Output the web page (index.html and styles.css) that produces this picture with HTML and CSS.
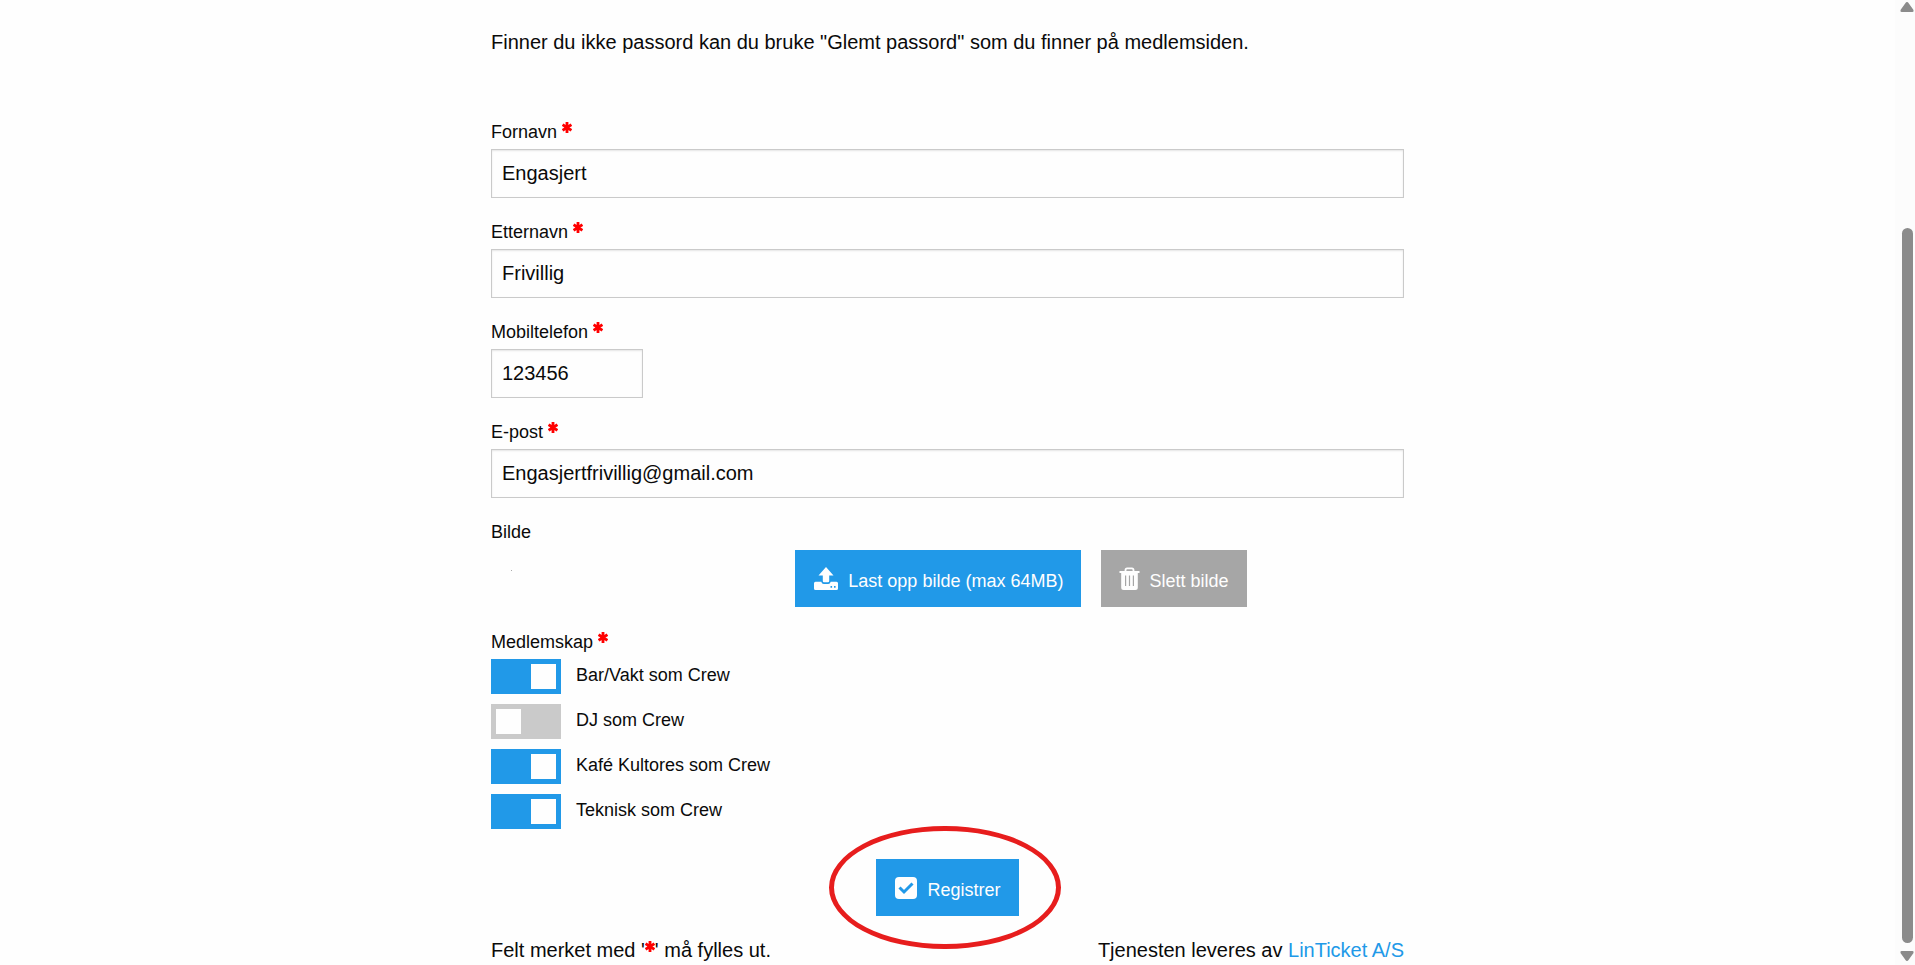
FILE: index.html
```html
<!DOCTYPE html>
<html lang="no">
  <head>
    <meta charset="UTF-8" />
    <meta name="viewport" content="width=device-width, initial-scale=1.0" />
    <title>Registrering</title>
    <link rel="stylesheet" href="styles.css">
  </head>
  <body>
    <svg class="sprite" aria-hidden="true">
      <symbol id="icon-star" viewBox="0 0 10 11">
        <path d="M5 0v11M.6 2.6l8.8 5.8M9.4 2.6L.6 8.4" stroke="currentColor" stroke-width="2.8" fill="none" />
      </symbol>
    </svg>

    <main class="page">
      <form class="container">
        <p class="intro">Finner du ikke passord kan du bruke "Glemt passord" som du finner på medlemsiden.</p>

        <div class="field">
          <label for="fornavn">Fornavn <svg class="required"><use href="#icon-star" /></svg></label>
          <input type="text" id="fornavn" value="Engasjert" />
        </div>
        <div class="field">
          <label for="etternavn">Etternavn <svg class="required"><use href="#icon-star" /></svg></label>
          <input type="text" id="etternavn" value="Frivillig" />
        </div>
        <div class="field">
          <label for="mobil">Mobiltelefon <svg class="required"><use href="#icon-star" /></svg></label>
          <input type="tel" id="mobil" class="short" value="123456" />
        </div>
        <div class="field">
          <label for="epost">E-post <svg class="required"><use href="#icon-star" /></svg></label>
          <input type="email" id="epost" value="Engasjertfrivillig@gmail.com" />
        </div>

        <div class="field">
          <div class="label">Bilde</div>
          <div class="image-row">
            <div class="preview"></div>
            <div class="image-buttons">
              <button type="button" class="btn btn-primary">
                <svg width="26" height="24" viewBox="-1 0 26 24" fill="currentColor">
                  <path d="M12 0l7.5 8.5h-4.3V14q0 1.200-1.200 1.200h-4Q8.800 15.200 8.800 14V8.500H4.500z" />
                  <path fill-rule="evenodd" d="M1.500 14.800h5.800q.5 2.200 2.500 2.200h4.400q2 0 2.500-2.200h5.800q1.500 0 1.500 1.500v5.200q0 1.500-1.500 1.500h-21Q0 23 0 21.500v-5.200q0-1.500 1.500-1.500zM16.500 19v1.800h1.600V19zM20 19v1.800h1.600V19z" />
                </svg>
                <span>Last opp bilde (max 64MB)</span>
              </button>
              <button type="button" class="btn btn-secondary">
                <svg width="21" height="24" viewBox="0 0 21 24">
                  <path d="M6.500 4V3q0-1.600 1.600-1.600h4.800q1.600 0 1.600 1.600v1" fill="none" stroke="currentColor" stroke-width="1.800" />
                  <path fill="currentColor" fill-rule="evenodd" d="M.5 4h20v2h-1.700v14.500q0 2.500-2.500 2.500H4.700q-2.500 0-2.500-2.500V6H.5zM6 8.500V19h1.200V8.500zM9.900 8.500V19h1.200V8.500zM13.800 8.500V19H15V8.500z" />
                </svg>
                <span>Slett bilde</span>
              </button>
            </div>
          </div>
        </div>

        <fieldset class="memberships">
          <legend>Medlemskap <svg class="required"><use href="#icon-star" /></svg></legend>
          <div class="switch">
            <input type="checkbox" id="bar" checked />
            <label for="bar">Bar/Vakt som Crew</label>
          </div>
          <div class="switch">
            <input type="checkbox" id="dj" />
            <label for="dj">DJ som Crew</label>
          </div>
          <div class="switch">
            <input type="checkbox" id="kafe" checked />
            <label for="kafe">Kafé Kultores som Crew</label>
          </div>
          <div class="switch">
            <input type="checkbox" id="teknisk" checked />
            <label for="teknisk">Teknisk som Crew</label>
          </div>
        </fieldset>

        <div class="submit">
          <button type="submit" class="btn btn-primary">
            <svg width="24" height="24" viewBox="0 0 24 24">
              <rect x="1" y="1" width="22" height="22" rx="4" fill="currentColor" />
              <path d="M5.500 11.500l4.500 4.500 8.500-8.500" fill="none" stroke="#2199e8" stroke-width="3" />
            </svg>
            <span>Registrer</span>
          </button>
          <span class="highlight"></span>
        </div>

        <div class="footer">
          <span>Felt merket med '<svg class="required"><use href="#icon-star" /></svg>' må fylles ut.</span>
          <span>Tjenesten leveres av <a href="#">LinTicket A/S</a></span>
        </div>
      </form>
    </main>

    <div class="scrollbar" aria-hidden="true">
      <svg width="14" height="10" viewBox="0 0 14 10"><path d="M7 0q1 0 1.500 1l5 7q.5 2-1 2h-11q-1.500 0-1-2l5-7Q6 0 7 0z" /></svg>
      <div class="track">
        <div class="thumb"></div>
      </div>
      <svg width="14" height="10" viewBox="0 0 14 10"><path d="M7 10q1 0 1.500-1l5-7q.5-2-1-2h-11Q0 0 .5 2l5 7q.5 1 1.500 1z" /></svg>
    </div>
  </body>
</html>
```
FILE: styles.css
```css
* {
  box-sizing: border-box;
}
body {
  margin: 0;
  height: 100vh;
  display: flex;
  overflow: hidden;
  background: #fefefe;
  color: #0a0a0a;
  font-family: Arial, "Liberation Sans", sans-serif;
  font-size: 20px;
  line-height: 28px;
}
.sprite {
  display: none;
}
.page {
  flex: 1;
}
.container {
  max-width: 913px;
  margin: 0 auto;
  padding-top: 28px;
}
.intro {
  margin: 0 0 62px;
}
.field {
  margin-bottom: 20px;
}
.field label,
.field .label,
legend {
  display: block;
  padding: 0;
  margin-bottom: 2px;
  font-size: 18px;
  line-height: 29px;
}
.required {
  width: 10px;
  height: 11px;
  color: #f00;
  vertical-align: 5px;
}
.field input {
  display: block;
  width: 100%;
  height: 49px;
  padding: 0 10px;
  border: 1px solid #cacaca;
  border-radius: 0;
  background: #fefefe;
  box-shadow: inset 0 1px 2px rgba(10, 10, 10, 0.1);
  color: #0a0a0a;
  font-family: inherit;
  font-size: 20px;
}
.field .short {
  width: 152px;
}
.image-row {
  display: grid;
  grid-template-columns: 1fr 2fr;
  padding: 1px 0;
}
.preview {
  width: 1px;
  height: 1px;
  margin: 20px;
  background: #aaa;
}
.image-buttons {
  display: flex;
  gap: 20px;
}
.btn {
  display: flex;
  align-items: center;
  gap: 9px;
  padding: 17px 18px 11px;
  border: none;
  color: #fefefe;
  font-family: inherit;
  font-size: 18px;
  line-height: 29px;
  cursor: pointer;
}
.btn svg {
  margin-bottom: 5px;
}
.btn-primary {
  background: #2199e8;
}
.btn-secondary {
  background: #a6a6a6;
}
.memberships {
  margin: 0;
  padding: 0;
  border: none;
}
.switch {
  display: flex;
  gap: 15px;
  margin-bottom: 10px;
}
.switch label {
  font-size: 18px;
  line-height: 32px;
}
.switch input {
  appearance: none;
  width: 70px;
  height: 35px;
  margin: 0;
  padding: 5px;
  display: flex;
  background: #cacaca;
  cursor: pointer;
}
.switch input::before {
  content: "";
  width: 25px;
  background: #fefefe;
}
.switch input:checked {
  justify-content: flex-end;
  background: #2199e8;
}
.submit {
  position: relative;
  width: fit-content;
  margin: 20px auto;
}
.highlight {
  position: absolute;
  inset: -33px -42px -33px -47px;
  border: 5px solid #e71d1d;
  border-radius: 50%;
  pointer-events: none;
}
.footer {
  display: flex;
  justify-content: space-between;
}
a {
  color: #2199e8;
  text-decoration: none;
}
.scrollbar {
  width: 20px;
  padding: 2px 1px 4px 5px;
  display: flex;
  flex-direction: column;
  background: #fcfcfc;
  fill: #8b8b8b;
}
.track {
  flex: 1;
  display: flex;
  flex-direction: column;
}
.track::before {
  content: "";
  flex: 216;
}
.track::after {
  content: "";
  flex: 8;
}
.thumb {
  flex: 715;
  width: 11px;
  margin-left: 2px;
  border-radius: 6px;
  background: #8b8b8b;
}
```
